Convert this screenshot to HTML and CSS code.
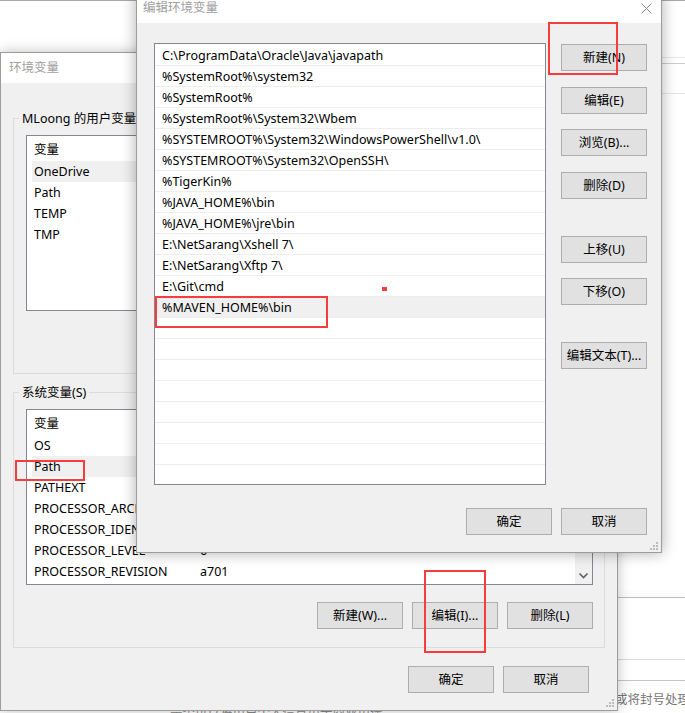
FILE: index.html
```html
<!DOCTYPE html>
<html lang="zh-CN">
<head>
<meta charset="utf-8">
<title>编辑环境变量</title>
<link rel="stylesheet" href="styles.css">
</head>
<body>
<div class="desktop">
  <div class="bg-top"></div>
  <div class="bg-right">
    <div class="bl l1"></div>
    <div class="bl l2"></div>
    <div class="bl l3"></div>
    <div class="bl l4"></div>
    <div class="bl l5"></div>
    <div class="bl l6"></div>
    <div class="bg-text">或将封号处理</div>
  </div>
  <div class="bg-bottom">是否可以将用户个人信息用于商业用途</div>

  <!-- 环境变量 (back window) -->
  <div class="win win-env">
    <div class="titlebar">环境变量</div>
    <div class="env-body">
      <div class="group">
        <div class="group-label">MLoong 的用户变量(U)</div>
        <div class="lv">
          <div class="lv-main">
            <div class="lv-head"><span class="c1">变量</span></div>
            <div class="lv-row sel"><span class="c1">OneDrive</span></div>
            <div class="lv-row"><span class="c1">Path</span></div>
            <div class="lv-row"><span class="c1">TEMP</span></div>
            <div class="lv-row"><span class="c1">TMP</span></div>
          </div>
        </div>
      </div>
      <div class="group g2">
        <div class="group-label">系统变量(S)</div>
        <div class="lv">
          <div class="lv-main">
            <div class="lv-head"><span class="c1">变量</span></div>
            <div class="lv-row"><span class="c1">OS</span></div>
            <div class="lv-row sel"><span class="c1">Path</span></div>
            <div class="lv-row"><span class="c1">PATHEXT</span></div>
            <div class="lv-row"><span class="c1">PROCESSOR_ARCHITECTURE</span></div>
            <div class="lv-row"><span class="c1">PROCESSOR_IDENTIFIER</span></div>
            <div class="lv-row"><span class="c1">PROCESSOR_LEVEL</span><span>6</span></div>
            <div class="lv-row"><span class="c1">PROCESSOR_REVISION</span><span>a701</span></div>
          </div>
          <div class="sb">
            <svg class="sb-arrow" width="17" height="17" viewBox="0 0 17 17"><path d="M4.5 6.5 L8.5 10.5 L12.5 6.5" fill="none" stroke="#606060" stroke-width="1.6"/></svg>
          </div>
        </div>
        <div class="btn-row">
          <div class="btn">新建(W)...</div>
          <div class="btn">编辑(I)...</div>
          <div class="btn">删除(L)</div>
        </div>
      </div>
      <div class="env-actions">
        <div class="btn">确定</div>
        <div class="btn">取消</div>
      </div>
    </div>
    <svg class="grip grip-env" width="8" height="8" viewBox="0 0 8 8"><g fill="#bcbcbc"><rect x="6" y="0" width="2" height="2"/><rect x="3" y="3" width="2" height="2"/><rect x="6" y="3" width="2" height="2"/><rect x="0" y="6" width="2" height="2"/><rect x="3" y="6" width="2" height="2"/><rect x="6" y="6" width="2" height="2"/></g></svg>
  </div>

  <!-- 编辑环境变量 (front window) -->
  <div class="win win-edit">
    <div class="titlebar edit-title">
      <span>编辑环境变量</span>
      <span class="close"><svg width="11" height="11" viewBox="0 0 11 11"><path d="M0.5 0.5 L10.5 10.5 M10.5 0.5 L0.5 10.5" stroke="#8a8a8a" stroke-width="1" fill="none"/></svg></span>
    </div>
    <div class="edit-body">
      <div class="edit-main">
        <div class="plist">
          <div class="prow">C:\ProgramData\Oracle\Java\javapath</div>
          <div class="prow">%SystemRoot%\system32</div>
          <div class="prow">%SystemRoot%</div>
          <div class="prow">%SystemRoot%\System32\Wbem</div>
          <div class="prow">%SYSTEMROOT%\System32\WindowsPowerShell\v1.0\</div>
          <div class="prow">%SYSTEMROOT%\System32\OpenSSH\</div>
          <div class="prow">%TigerKin%</div>
          <div class="prow">%JAVA_HOME%\bin</div>
          <div class="prow">%JAVA_HOME%\jre\bin</div>
          <div class="prow">E:\NetSarang\Xshell 7\</div>
          <div class="prow">E:\NetSarang\Xftp 7\</div>
          <div class="prow">E:\Git\cmd</div>
          <div class="prow sel">%MAVEN_HOME%\bin</div>
          <div class="prow"></div>
          <div class="prow"></div>
          <div class="prow"></div>
          <div class="prow"></div>
          <div class="prow"></div>
          <div class="prow"></div>
          <div class="prow"></div>
          <div class="prow"></div>
        </div>
        <div class="side">
          <div class="btn">新建(N)</div>
          <div class="btn s-gap">编辑(E)</div>
          <div class="btn s-gap2">浏览(B)...</div>
          <div class="btn s-gap">删除(D)</div>
          <div class="btn s-big">上移(U)</div>
          <div class="btn s-gap2">下移(O)</div>
          <div class="btn s-big">编辑文本(T)...</div>
        </div>
      </div>
      <div class="edit-actions">
        <div class="btn">确定</div>
        <div class="btn">取消</div>
      </div>
    </div>
    <svg class="grip grip-edit" width="8" height="8" viewBox="0 0 8 8"><g fill="#bcbcbc"><rect x="6" y="0" width="2" height="2"/><rect x="3" y="3" width="2" height="2"/><rect x="6" y="3" width="2" height="2"/><rect x="0" y="6" width="2" height="2"/><rect x="3" y="6" width="2" height="2"/><rect x="6" y="6" width="2" height="2"/></g></svg>
  </div>

  <!-- red annotations -->
  <div class="mark m1"></div>
  <div class="mark m2"></div>
  <div class="mark m3"></div>
  <div class="mark m4"></div>
  <div class="dot"></div>
</div>
</body>
</html>
```

FILE: styles.css
```css
* { box-sizing: border-box; margin: 0; padding: 0; }
html, body { width: 685px; height: 713px; overflow: hidden; background: #fff; }
body {
  font-family: "Noto Sans", "Noto Sans CJK SC", sans-serif;
  font-size: 12.5px;
  color: #000;
}
.desktop { position: relative; width: 685px; height: 713px; overflow: hidden; background: #fff; }

/* background bits */
.bg-top {
  position: absolute; left: -20px; top: 0; width: 740px; height: 60px;
  border-top: 1px solid #a9a9a9; background: #fff;
}
.bg-right { position: absolute; left: 600px; top: 0; width: 85px; height: 713px; }
.bl { height: 1px; background: #e2e2e2; }
.l1 { margin-top: 57px; background: #e6e6e6; }
.l2 { margin-top: 5px; background: #cdcdcd; }
.l3 { margin-top: 29px; background: #e6e6e6; }
.l4 { margin-top: 503px; background: #bdbdbd; box-shadow: 0 -3px 5px rgba(0,0,0,.10); }
.l5 { margin-top: 61px; background: #d9d9d9; }
.l6 { margin-top: 20px; background: #c6c6c6; box-shadow: 0 3px 5px rgba(0,0,0,.08); }
.bg-text { margin-top: 11px; padding-left: 15px; line-height: 16px; color: #777; font-size: 12.5px; white-space: nowrap; }
.bg-bottom { position: absolute; left: 170px; top: 705px; color: #888; white-space: nowrap; line-height: 16px; font-size: 12.5px; }

/* windows */
.win { position: absolute; border: 1px solid #9c9c9c; background: #f0f0f0; }
.titlebar { height: 30px; line-height: 30px; background: #fff; color: #a0a0a0; padding-left: 8px; white-space: nowrap; }
.win-env {
  left: 0; top: 52px; width: 618px; height: 659px;
  box-shadow: 0 0 12px rgba(0,0,0,.25);
}
.win-edit {
  left: 136px; top: -8px; width: 526px; height: 561px;
  box-shadow: 0 0 14px rgba(0,0,0,.32);
}
.edit-title { display: flex; justify-content: space-between; padding-left: 6px; }
.close { width: 30px; display: flex; align-items: center; justify-content: center; padding-top: 1px; }
.close svg { display: block; }

/* env body */
.env-body { padding: 35px 0 0 12px; }
.group {
  width: 592px; height: 256px;
  border: 1px solid #dcdcdc;
  padding: 0 11px 0 12px;
}
.g2 { margin-top: 18px; }
.group-label {
  width: max-content;
  margin: -9px 0 0 -7px;
  padding: 0 3px;
  line-height: 17px;
  background: #f0f0f0;
  white-space: nowrap;
}
.lv {
  margin-top: 8px;
  width: 567px; height: 176px;
  border: 1px solid #828790;
  background: #fff;
  display: flex;
  overflow: hidden;
}
.lv-main { flex: 1; min-width: 0; overflow: hidden; }
.lv-head { height: 25px; line-height: 27px; padding-left: 7px; display: flex; white-space: nowrap; }
.lv-head .c1 { width: 168px; }
.lv-row { height: 21px; line-height: 22px; margin-left: 5px; padding-left: 2px; display: flex; white-space: nowrap; }
.lv-row .c1 { width: 166px; flex: none; }
.lv-row.sel { background: #f0f0f0; }
.sb { width: 17px; flex: none; background: #f0f0f0; display: flex; flex-direction: column; justify-content: flex-end; }
.sb-arrow { display: block; }

.btn {
  width: 86px; height: 27px; flex: none;
  background: #e1e1e1;
  border: 1px solid #adadad;
  display: flex; align-items: center; justify-content: center;
  white-space: nowrap;
  line-height: 1;
  padding-top: 1px;
}
.btn-row { display: flex; justify-content: flex-end; gap: 9px; margin-top: 17px; }
.env-actions { width: 576px; display: flex; justify-content: flex-end; gap: 9px; margin-top: 18px; }

/* edit body */
.edit-body { padding: 20px 14px 0 17px; }
.edit-main { display: flex; gap: 15px; }
.plist {
  width: 392px; height: 442px;
  border: 1px solid #828790;
  background: #fff;
  padding-top: 1px;
  overflow: hidden;
}
.prow {
  height: 21px; line-height: 22px;
  border-bottom: 1px solid #ededed;
  padding-left: 7px;
  white-space: nowrap;
}
.prow.sel { background: #f0f0f0; }
.side { display: flex; flex-direction: column; padding-top: 1px; }
.s-gap { margin-top: 16px; }
.s-gap2 { margin-top: 15px; }
.s-big { margin-top: 37px; }
.edit-actions { display: flex; justify-content: flex-end; gap: 9px; margin-top: 23px; }

.grip { position: absolute; display: block; }
.grip-edit { right: 3px; bottom: 2px; }
.grip-env { right: 3px; bottom: 3px; }

/* annotations */
.mark { position: absolute; border: 2px solid #f83b3b; }
.m1 { left: 548px; top: 22px; width: 70px; height: 53px; }
.m2 { left: 155px; top: 296px; width: 173px; height: 32px; }
.m3 { left: 15px; top: 460px; width: 70px; height: 21px; }
.m4 { left: 424px; top: 570px; width: 62px; height: 83px; }
.dot { position: absolute; left: 382px; top: 287px; width: 5px; height: 4px; background: #f83b3b; }
```
